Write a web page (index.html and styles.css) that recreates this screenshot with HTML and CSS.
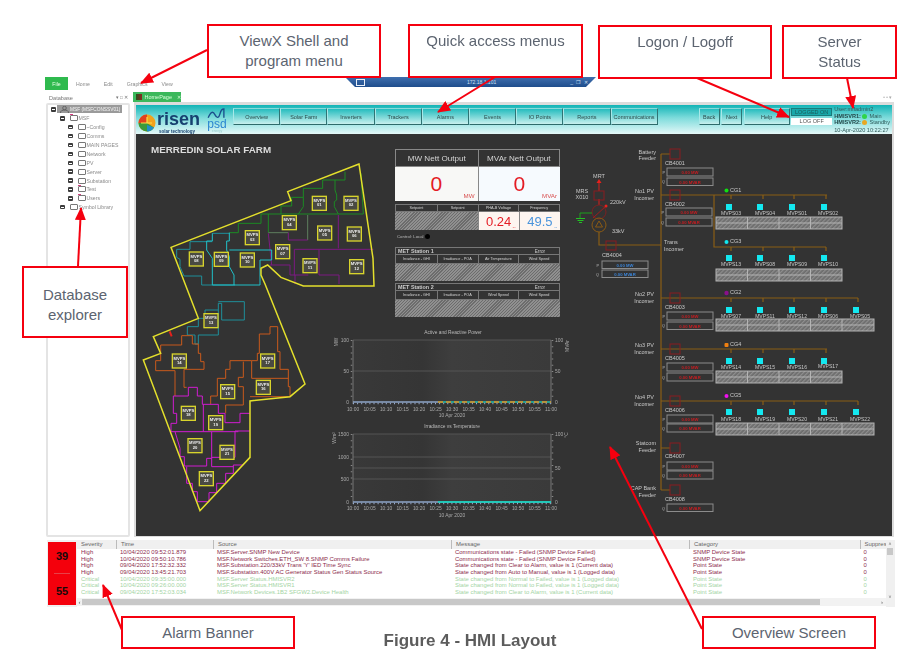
FILE: index.html
```html
<!DOCTYPE html>
<html lang="en">
<head>
<meta charset="utf-8">
<title>Figure 4 - HMI Layout</title>
<link rel="stylesheet" href="styles.css">
</head>
<body>
<div class="page">
  <div class="ribbon">
    <span class="file">File</span>
    <nav class="ribbon-menu"><span>Home</span><span>Edit</span><span>Graphics</span><span>View</span></nav>
  </div>
  <div class="titlebar">
    <span class="tb-icon"></span><span class="tb-host">172.18.1.101</span><span class="tb-ctl">_ &#10064; &#10005;</span>
  </div>

  <div class="workspace">
    <aside class="db">
      <div class="db-title"><span>Database</span><span class="db-ctl">&#9662; &#9633; &#10005;</span></div>
      <div class="tree">
        <div class="node n0"><i class="exp"></i><span class="root"><svg class="user" viewBox="0 0 9 7" width="9" height="7"><circle cx="4.5" cy="2" r="1.800" fill="none" stroke="#555" stroke-width=".8"/><path d="M.5 7c0-2.500 2-3 4-3s4 .5 4 3" fill="none" stroke="#555" stroke-width=".8"/></svg>MSF (MSFCONSSV01)</span></div>
        <div class="node n1"><i class="exp"></i><i class="folder flag"></i>MSF</div>
        <div class="node n2"><i class="exp"></i><i class="folder"></i>~Config</div>
        <div class="node n2"><i class="exp"></i><i class="folder"></i>Comms</div>
        <div class="node n2"><i class="exp"></i><i class="folder"></i>MAIN PAGES</div>
        <div class="node n2"><i class="exp"></i><i class="folder"></i>Network</div>
        <div class="node n2"><i class="exp"></i><i class="folder"></i>PV</div>
        <div class="node n2"><i class="exp"></i><i class="folder"></i>Server</div>
        <div class="node n2"><i class="exp"></i><i class="folder"></i>Substation</div>
        <div class="node n2"><i class="exp"></i><i class="folder flag"></i>Test</div>
        <div class="node n2"><i class="exp"></i><i class="folder flag"></i>Users</div>
        <div class="node n1"><i class="exp"></i><i class="folder"></i>Symbol Library</div>
      </div>
    </aside>

    <main class="main">
      <div class="tabs">
        <div class="tab"><i class="tab-icon"></i>HomePage<span class="tab-x">&#10005;</span></div>
        <div class="tab-dots">&#8226; &#8226; &#9662;</div>
      </div>
      <div class="frame">
        <header class="hmi-head">
          <div class="logo">
            <svg class="sun" viewBox="0 0 18 18" width="18" height="18">
              <circle cx="9" cy="9" r="8.5" fill="#f2a21c"/>
              <path d="M.5 9a8.5 8.5 0 0 1 8.5-8.5V9z" fill="#e2401f"/>
              <path d="M.5 9a8.5 8.5 0 0 0 8.5 8.5 8.5 8.5 0 0 0 7-4L9 9z" fill="#3c9a3a"/>
              <path d="M9 17.5a8.5 8.5 0 0 0 7-4L9 11z" fill="#1f8fc8"/>
              <path d="M3 9h11M9 3v6" stroke="#f7e04a" stroke-width="1.2"/>
            </svg>
            <div class="risen"><span class="risen-name">risen</span><span class="risen-sub">solar technology</span></div>
            <div class="psd">
              <svg viewBox="0 0 20 11" width="20" height="11"><path d="M1 10c3-7 5-7 7-3s4 3 5-1 2-5 4-5v9" fill="none" stroke="#1c4f8c" stroke-width="1.4"/></svg>
              <span class="psd-name">psd</span><span class="psd-sub">energy</span>
            </div>
          </div>
          <nav class="menu">
            <a>Overview</a><a>Solar Farm</a><a>Inverters</a><a>Trackers</a><a>Alarms</a><a>Events</a><a>IO Points</a><a>Reports</a><a>Communications</a>
          </nav>
          <nav class="menu menu-b"><a class="back">Back</a><a class="next">Next</a><a class="help">Help</a></nav>
          <div class="logon"><span class="on">LOGGED ON</span><span class="off">LOG OFF</span></div>
          <div class="status">
            <div>User:mlfadmin2</div>
            <div><b>HMISVR1:</b><i class="led main-led"></i> Main</div>
            <div><b>HMISVR2:</b><i class="led stby-led"></i> Standby</div>
            <div class="stamp">10-Apr-2020 10:22:27</div>
          </div>
        </header>

        <section class="board">
          <svg class="map" viewBox="0 0 777 1206" width="259" height="402" aria-label="Site map">
            <text class="map-title" x="45" y="58">MERREDIN SOLAR FARM</text>
            <g transform="translate(-3 18)" fill="none" stroke-width="3">
              <g stroke="#1c8a24">
                <path d="M630 95V120H563V145H505V172H470V198H438V222H378V250H310V278H283M600 120V150L605 165V180L598 185V200L610 222M505 172V200L490 222M400 222V278M438 222H610M610 222H685L678 100"/>
              </g>
              <path stroke="#5d7d5d" d="M518 225V300M400 278H460"/>
              <g stroke="#7c1a82">
                <path d="M610 225V325M460 278V300H518M478 328H715M478 328V405H520M552 328V405H612V432M405 375H465V405H480V432M400 280L410 375"/>
              </g>
              <g stroke="#1f8f9a">
                <path d="M165 305V328H125V352L135 358V380L147 408H200V435H300M165 305H232M232 280H283M250 485H328V540H260V490H250V510H210V535H190V560H157V585H180V612H190V585H250V510"/>
              </g>
              <g stroke="#20c0c8">
                <path d="M232 280V303H215V330L232 355V435H375V360H410V330H283M283 278V303H275V330L283 350V380L297 405V435"/>
              </g>
              <g stroke="#c8591c">
                <path d="M405 560H428V635H435V688H460V740H465V770H345M405 560V582H373V640H367V662H350V715H460M77 640V615H140V587H172V612H190V640H197V665H207V688H147V742H155M77 640V662H62V692H120V768M350 662H285V688H272V715H247V768H227V793M325 665V712H310V740H325V795H272V820"/>
              </g>
              <g stroke="#d01cd0">
                <path d="M115 768H160V742H187V768H202V793H250V820H270V848H315V820H345M115 768V820H125V850H108V875H310M205 793V875M230 875V980H295M230 952H300V873H345M120 875L135 925V950H148V978H215V955H230M155 980V1030H172V1055H187V1085H222V1058H245V1030H272V1000H295V975H325"/>
              </g>
              <path stroke="#e4e02c" stroke-width="4.5" d="M672 72L458 155L468 182L108 322L190 535L55 590L77 640L25 660L195 1112L345 952V783L465 770L510 732L390 432L378 405V385L398 375L438 412L505 438H717L714 355Z"/>
              <path stroke="#e8201c" stroke-width="6" d="M104 574L110 589"/>
              <g class="unit">
                <rect x="532" y="169" width="42" height="42"/><text x="553" y="186">MVPS<tspan x="553" dy="13">01</tspan></text>
                <rect x="627" y="169" width="42" height="42"/><text x="648" y="186">MVPS<tspan x="648" dy="13">02</tspan></text>
                <rect x="331" y="272" width="42" height="42"/><text x="352" y="289">MVPS<tspan x="352" dy="13">03</tspan></text>
                <rect x="442" y="227" width="42" height="42"/><text x="463" y="244">MVPS<tspan x="463" dy="13">04</tspan></text>
                <rect x="548" y="258" width="42" height="42"/><text x="569" y="275">MVPS<tspan x="569" dy="13">05</tspan></text>
                <rect x="637" y="261" width="42" height="42"/><text x="658" y="278">MVPS<tspan x="658" dy="13">06</tspan></text>
                <rect x="422" y="314" width="42" height="42"/><text x="443" y="331">MVPS<tspan x="443" dy="13">07</tspan></text>
                <rect x="163" y="336" width="42" height="42"/><text x="184" y="353">MVPS<tspan x="184" dy="13">08</tspan></text>
                <rect x="238" y="337" width="42" height="42"/><text x="259" y="354">MVPS<tspan x="259" dy="13">09</tspan></text>
                <rect x="316" y="339" width="42" height="42"/><text x="337" y="356">MVPS<tspan x="337" dy="13">10</tspan></text>
                <rect x="504" y="356" width="42" height="42"/><text x="525" y="373">MVPS<tspan x="525" dy="13">11</tspan></text>
                <rect x="644" y="359" width="42" height="42"/><text x="665" y="376">MVPS<tspan x="665" dy="13">12</tspan></text>
                <rect x="207" y="521" width="42" height="42"/><text x="228" y="538">MVPS<tspan x="228" dy="13">13</tspan></text>
                <rect x="112" y="642" width="42" height="42"/><text x="133" y="659">MVPS<tspan x="133" dy="13">14</tspan></text>
                <rect x="257" y="734" width="42" height="42"/><text x="278" y="751">MVPS<tspan x="278" dy="13">15</tspan></text>
                <rect x="364" y="721" width="42" height="42"/><text x="385" y="738">MVPS<tspan x="385" dy="13">16</tspan></text>
                <rect x="377" y="642" width="42" height="42"/><text x="398" y="659">MVPS<tspan x="398" dy="13">17</tspan></text>
                <rect x="139" y="799" width="42" height="42"/><text x="160" y="816">MVPS<tspan x="160" dy="13">18</tspan></text>
                <rect x="221" y="827" width="42" height="42"/><text x="242" y="844">MVPS<tspan x="242" dy="13">19</tspan></text>
                <rect x="159" y="896" width="42" height="42"/><text x="180" y="913">MVPS<tspan x="180" dy="13">20</tspan></text>
                <rect x="255" y="916" width="42" height="42"/><text x="276" y="933">MVPS<tspan x="276" dy="13">21</tspan></text>
                <rect x="193" y="995" width="42" height="42"/><text x="214" y="1012">MVPS<tspan x="214" dy="13">22</tspan></text>
              </g>
            </g>
          </svg>

          <div class="gauges">
            <div class="g-head"><div>MW Nett Output</div><div>MVAr Nett Output</div></div>
            <div class="g-vals">
              <div class="g-big tint-a">0<span>MW</span></div>
              <div class="g-big tint-b">0<span>MVAr</span></div>
            </div>
            <div class="g-labels"><div>Setpoint</div><div>Setpoint</div><div>PHA-B Voltage</div><div>Frequency</div></div>
            <div class="g-row">
              <div class="hatch span2"></div>
              <div class="g-mid red">0.24<span>kV</span></div>
              <div class="g-mid blue">49.5<span>Hz</span></div>
            </div>
            <div class="control">Control: Local<i></i></div>
            <div class="met first">
              <div class="met-head"><b>MET Station 1</b><span>Error</span></div>
              <div class="g-labels dark"><div>Irradiance - GHI</div><div>Irradiance - POA</div><div>Air Temperature</div><div>Wind Speed</div></div>
              <div class="hatch met-h"></div>
            </div>
            <div class="met">
              <div class="met-head"><b>MET Station 2</b><span>Error</span></div>
              <div class="g-labels dark"><div>Irradiance - GHI</div><div>Irradiance - POA</div><div>Wind Speed</div><div>Wind Speed</div></div>
              <div class="hatch met-h"></div>
            </div>
          </div>

          <svg class="charts" viewBox="325 320 247 216" width="247" height="216" aria-label="Trend charts">
            <defs>
              <linearGradient id="band" x1="0" x2="1" y1="0" y2="0">
                <stop offset="0" stop-color="#393939"/><stop offset=".35" stop-color="#353535"/><stop offset=".5" stop-color="#3e3e3e"/><stop offset="1" stop-color="#3a3a3a"/>
              </linearGradient>
            </defs>
            <text class="c-title" x="453" y="334">Active and Reactive Power</text>
            <rect x="353" y="340" width="198" height="62" fill="url(#band)"/>
            <path class="grid" d="M353 340H551M353 371H551"/>
            <path class="axis" d="M353 340V404M551 340V404"/>
            <path class="tick" d="M351.5 340V402M552.5 340V402"/>
            <path d="M353 402H438" stroke="#8ea6c8" stroke-width="1.5"/>
            <path d="M438 402H551" stroke="#20c0b0" stroke-width="1.5"/>
            <path d="M438 402H551" stroke="#e8901c" stroke-width="1.5" stroke-dasharray="5 3"/>
            <path class="xtick" d="M353 403.5H551"/>
            <g class="c-lab">
              <text class="end" x="349" y="342">100</text><text class="end" x="349" y="373">50</text><text class="end" x="349" y="404">0</text>
              <text x="555" y="342">100</text><text x="555" y="373">50</text><text x="555" y="404">0</text>
              <text class="mid rot" transform="rotate(-90 338 342)" x="338" y="342">MW</text>
              <text class="mid rot" transform="rotate(-90 569 346)" x="569" y="346">MVAr</text>
            </g>
            <g class="c-lab mid">
              <text x="353" y="411">10:00</text><text x="369.5" y="411">10:05</text><text x="386" y="411">10:10</text><text x="402.500" y="411">10:15</text><text x="419" y="411">10:20</text><text x="435.5" y="411">10:25</text><text x="452" y="411">10:30</text><text x="468.5" y="411">10:35</text><text x="485" y="411">10:40</text><text x="501.5" y="411">10:45</text><text x="518" y="411">10:50</text><text x="534.5" y="411">10:55</text><text x="551" y="411">11:00</text>
              <text x="452" y="417">10 Apr 2020</text>
            </g>

            <text class="c-title" x="452" y="428">Irradiance vs Temperature</text>
            <rect x="353" y="434" width="198" height="68" fill="url(#band)"/>
            <path class="grid" d="M353 434H551M353 457H551M353 468H551M353 479H551"/>
            <path class="axis" d="M353 434V504M551 434V504"/>
            <path class="tick" d="M351.5 434V502M552.5 434V502"/>
            <path d="M353 502H438" stroke="#8ea6c8" stroke-width="1.5"/>
            <path d="M438 502H551" stroke="#20c8b8" stroke-width="2"/>
            <path class="xtick" d="M353 503.500H551"/>
            <g class="c-lab">
              <text class="end" x="349" y="436">1500</text><text class="end" x="349" y="459">1000</text><text class="end" x="349" y="481">500</text><text class="end" x="349" y="504">0</text>
              <text x="555" y="436">100</text><text x="555" y="470">50</text><text x="555" y="504">0</text>
              <text class="mid rot" transform="rotate(-90 336 438)" x="336" y="438">W/m&#178;</text>
              <text class="mid rot" transform="rotate(-90 568 435)" x="568" y="435">&#176;C</text>
            </g>
            <g class="c-lab mid">
              <text x="353" y="510">10:00</text><text x="369.5" y="510">10:05</text><text x="386" y="510">10:10</text><text x="402.500" y="510">10:15</text><text x="419" y="510">10:20</text><text x="435.5" y="510">10:25</text><text x="452" y="510">10:30</text><text x="468.5" y="510">10:35</text><text x="485" y="510">10:40</text><text x="501.5" y="510">10:45</text><text x="518" y="510">10:50</text><text x="534.5" y="510">10:55</text><text x="551" y="510">11:00</text>
              <text x="452" y="517">10 Apr 2020</text>
            </g>
          </svg>

          <svg class="sld" viewBox="572 134 320 402" width="320" height="402" aria-label="Single line diagram">
            <defs>
              <pattern id="h" width="3" height="3" patternUnits="userSpaceOnUse" patternTransform="rotate(45)">
                <rect width="3" height="3" fill="#6c6c6c"/><rect width="1.3" height="3" fill="#8e8e8e"/>
              </pattern>
            </defs>

            <!-- transformer -->
            <text class="t m" x="599" y="178">MRT</text>
            <text class="t m" x="582" y="193">MRS</text><text class="t m" x="582" y="199">X010</text>
            <text class="t" x="610" y="204">220kV</text>
            <text class="t" x="612" y="233">33kV</text>
            <path d="M599 199V205M599 191V182" stroke="#d8201c" fill="none"/>
            <path d="M599 179l-2.500 4h5z" fill="#e8201c"/>
            <rect x="594" y="191" width="10" height="9" class="cb"/>
            <circle cx="599" cy="212" r="7" fill="none" stroke="#7c2020"/>
            <path d="M593 218L606 206" stroke="#a01c1c"/><circle cx="606" cy="206" r="1.500" fill="#e8201c"/>
            <path d="M592 213H580V218" fill="none" stroke="#1ca01c"/>
            <path d="M576 218.500H585M577.500 220.500H583.500M579 222.500H582" stroke="#24c024"/>
            <circle cx="599" cy="225" r="7" fill="none" stroke="#8a5a14"/>
            <path d="M599 221l-3.500 6h7z" fill="none" stroke="#8a5a14"/>

            <g class="bus">
              <path d="M599 232V245H661M661 154V490"/>
              <path d="M661 154H670M661 195H827M714 195V247H826M731 195V199M763 195V199M794 195V199M826 195V199M731 247V251M763 247V251M794 247V251M826 247V251"/>
              <path d="M661 298H858M731 298V302M763 298V302M794 298V302M826 298V302M858 298V302"/>
              <path d="M661 349H827M731 349V353M763 349V353M794 349V353M826 349V353"/>
              <path d="M661 401H858M731 401V405M763 401V405M794 401V405M826 401V405M858 401V405"/>
              <path d="M661 448H670M661 490H670"/>
            </g>

            <g class="cbs">
              <rect x="606" y="241" width="10" height="9"/><rect x="670" y="149" width="10" height="10"/><rect x="670" y="190" width="10" height="10"/><rect x="670" y="293" width="10" height="10"/><rect x="670" y="344" width="10" height="10"/><rect x="670" y="396" width="10" height="10"/><rect x="670" y="443" width="10" height="10"/><rect x="670" y="485" width="10" height="10"/>
            </g>

            <!-- feeder labels -->
            <g class="t e">
              <text x="656" y="153.500">Battery</text><text x="656" y="160">Feeder</text>
              <text x="654" y="193">No1 PV</text><text x="654" y="199.500">Incomer</text>
              <text x="654" y="296">No2 PV</text><text x="654" y="302.500">Incomer</text>
              <text x="654" y="347">No3 PV</text><text x="654" y="353.500">Incomer</text>
              <text x="654" y="399">No4 PV</text><text x="654" y="405.500">Incomer</text>
              <text x="656" y="445">Statcom</text><text x="656" y="451.500">Feeder</text>
              <text x="656" y="490">CAP Bank</text><text x="656" y="496.500">Feeder</text>
            </g>
            <text class="t" x="664" y="244">Trans</text><text class="t" x="664" y="250.500">Incomer</text>

            <g class="t">
              <text x="602" y="257">CB4004</text><text x="665" y="165">CB4001</text><text x="665" y="206">CB4002</text><text x="665" y="309">CB4003</text><text x="665" y="360">CB4005</text><text x="665" y="411.500">CB4006</text><text x="665" y="458">CB4007</text><text x="665" y="501">CB4008</text>
              <text x="730" y="192">CG1</text><text x="730" y="243">CG3</text><text x="730" y="294">CG2</text><text x="730" y="346">CG4</text><text x="730" y="397">CG5</text>
            </g>
            <circle cx="726.500" cy="190.500" r="2" fill="#10e010"/><circle cx="726.500" cy="242" r="2" fill="#10e8f0"/><circle cx="726.500" cy="293" r="2.200" fill="#8a108a"/><rect x="724.500" y="343" width="4" height="4" rx="1" fill="#f08010"/><circle cx="726.500" cy="396" r="2" fill="#f010f0"/>

            <!-- P / Q readouts -->
            <g class="pq">
              <rect x="602" y="261" width="46" height="7.500"/><rect x="602" y="270" width="46" height="7.500"/>
              <rect x="667" y="168" width="46" height="8"/><rect x="667" y="178" width="46" height="7.500"/>
              <rect x="666" y="208" width="46" height="8"/><rect x="666" y="218" width="46" height="8"/>
              <rect x="667" y="312" width="46" height="8"/><rect x="667" y="322" width="46" height="7.500"/>
              <rect x="667" y="363" width="46" height="8"/><rect x="667" y="373" width="46" height="8"/>
              <rect x="667" y="415" width="46" height="8"/><rect x="667" y="424" width="46" height="8"/>
              <rect x="667" y="462" width="46" height="8"/><rect x="667" y="471" width="46" height="8"/>
              <rect x="667" y="504" width="46" height="7.500"/>
            </g>
            <g class="pql">
              <text x="599" y="266.500">P</text><text x="599" y="275.500">Q</text>
              <text x="665" y="173.500">P</text><text x="665" y="183">Q</text>
              <text x="664" y="213.500">P</text><text x="664" y="223.500">Q</text>
              <text x="665" y="317.500">P</text><text x="665" y="327">Q</text>
              <text x="665" y="368.500">P</text><text x="665" y="378.500">Q</text>
              <text x="665" y="420.500">P</text><text x="665" y="429.500">Q</text>
              <text x="665" y="467.500">P</text><text x="665" y="476.500">Q</text>
              <text x="665" y="509.500">Q</text>
            </g>
            <g class="val blue-t"><text x="625" y="266.500">0.00 MW</text><text x="625" y="275.500">0.00 MVAR</text></g>
            <g class="val red-t">
              <text x="690" y="173.500">0.00 MW</text><text x="690" y="183.500">0.00 MVAR</text>
              <text x="689" y="213.500">0.00 MW</text><text x="689" y="223.500">0.00 MVAR</text>
              <text x="690" y="317.500">0.00 MW</text><text x="690" y="327.500">0.00 MVAR</text>
              <text x="690" y="368.500">0.00 MW</text><text x="690" y="378.500">0.00 MVAR</text>
              <text x="690" y="420.500">0.00 MW</text><text x="690" y="429.500">0.00 MVAR</text>
              <text x="690" y="467.500">0.00 MW</text><text x="690" y="476.500">0.00 MVAR</text>
              <text x="690" y="509.500">0.00 MVAR</text>
            </g>

            <!-- inverter squares -->
            <g fill="#14e8f0">
              <rect x="726" y="204" width="6" height="6"/><rect x="757" y="204" width="6" height="6"/><rect x="789" y="204" width="6" height="6"/><rect x="821" y="204" width="6" height="6"/>
              <rect x="726" y="255" width="6" height="6"/><rect x="757" y="255" width="6" height="6"/><rect x="789" y="255" width="6" height="6"/><rect x="821" y="255" width="6" height="6"/>
              <rect x="726" y="307" width="6" height="6"/><rect x="757" y="307" width="6" height="6"/><rect x="789" y="307" width="6" height="6"/><rect x="821" y="307" width="6" height="6"/><rect x="853" y="307" width="6" height="6"/>
              <rect x="726" y="358" width="6" height="6"/><rect x="757" y="358" width="6" height="6"/><rect x="789" y="358" width="6" height="6"/><rect x="821" y="358" width="6" height="6"/>
              <rect x="726" y="409" width="6" height="6"/><rect x="757" y="409" width="6" height="6"/><rect x="789" y="409" width="6" height="6"/><rect x="821" y="409" width="6" height="6"/><rect x="853" y="409" width="6" height="6"/>
            </g>

            <g class="t m">
              <text x="731" y="215">MVPS03</text><text x="765" y="215">MVPS04</text><text x="797" y="215">MVPS01</text><text x="828" y="215">MVPS02</text>
              <text x="731" y="266">MVPS13</text><text x="765" y="266">MVPS08</text><text x="797" y="266">MVPS09</text><text x="828" y="266">MVPS10</text>
              <text x="731" y="318">MVPS07</text><text x="765" y="318">MVPS11</text><text x="797" y="318">MVPS12</text><text x="828" y="318">MVPS06</text><text x="860" y="318">MVPS05</text>
              <text x="731" y="369">MVPS14</text><text x="765" y="369">MVPS15</text><text x="797" y="369">MVPS16</text><text x="828" y="367.500">MVPS17</text>
              <text x="731" y="421">MVPS18</text><text x="765" y="421">MVPS19</text><text x="797" y="421">MVPS20</text><text x="828" y="421">MVPS21</text><text x="860" y="421">MVPS22</text>
            </g>

            <g class="cells">
              <rect x="716" y="217" width="126" height="12"/><path d="M716 223H842M747.500 217V229M779 217V229M810.500 217V229"/>
              <rect x="716" y="269" width="126" height="12"/><path d="M716 275H842M747.500 269V281M779 269V281M810.500 269V281"/>
              <rect x="716" y="319" width="158" height="12"/><path d="M716 325H874M747.500 319V331M779 319V331M810.500 319V331M842 319V331"/>
              <rect x="716" y="371" width="126" height="12"/><path d="M716 377H842M747.500 371V383M779 371V383M810.500 371V383"/>
              <rect x="716" y="423" width="158" height="12"/><path d="M716 429H874M747.500 423V435M779 423V435M810.500 423V435M842 423V435"/>
            </g>
          </svg>
        </section>
      </div>
    </main>
  </div>

  <section class="banner">
    <div class="counts"><b>39</b><hr><b>55</b></div>
    <div class="alarms">
      <div class="a-row a-head"><span>Severity</span><span>Time</span><span>Source</span><span>Message</span><span>Category</span><span>Suppres</span></div>
      <div class="a-body">
        <div class="a-row high"><span>High</span><span>10/04/2020 09:52:01.879</span><span>MSF.Server.SNMP New Device</span><span>Communications state - Failed (SNMP Device Failed)</span><span>SNMP Device State</span><span>0</span></div>
        <div class="a-row high"><span>High</span><span>10/04/2020 09:50:10.786</span><span>MSF.Network Switches.ETH_SW 8.SNMP Comms Failure</span><span>Communications state - Failed (SNMP Device Failed)</span><span>SNMP Device State</span><span>0</span></div>
        <div class="a-row high"><span>High</span><span>09/04/2020 17:52:32.332</span><span>MSF.Substation.220/33kV Trans 'Y' IED Time Sync</span><span>State changed from Clear to Alarm, value is 1 (Current data)</span><span>Point State</span><span>0</span></div>
        <div class="a-row high"><span>High</span><span>09/04/2020 13:45:21.703</span><span>MSF.Substation.400V AC Generator Status Gen Status Source</span><span>State changed from Auto to Manual, value is 1 (Logged data)</span><span>Point State</span><span>0</span></div>
        <div class="a-row crit"><span>Critical</span><span>10/04/2020 09:35:00.000</span><span>MSF.Server Status.HMISVR2</span><span>State changed from Normal to Failed, value is 1 (Logged data)</span><span>Point State</span><span>0</span></div>
        <div class="a-row crit"><span>Critical</span><span>10/04/2020 09:26:00.000</span><span>MSF.Server Status.HMISVR1</span><span>State changed from Normal to Failed, value is 1 (Logged data)</span><span>Point State</span><span>0</span></div>
        <div class="a-row crit"><span>Critical</span><span>09/04/2020 17:52:03.034</span><span>MSF.Network Devices.1B2 SFGW2.Device Health</span><span>State changed from Clear to Alarm, value is 1 (Current data)</span><span>Point State</span><span>0</span></div>
      </div>
      <div class="hscroll"><span class="sl">&#8249;</span><span class="thumb"></span><span class="sr">&#8250;</span></div>
    </div>
    <div class="vscroll"><span>&#708;</span><i></i><span class="dn">&#709;</span></div>
  </section>

  <p class="caption">Figure 4 - HMI Layout</p>

  <div class="callout c-shell">ViewX Shell and<br>program menu</div>
  <div class="callout c-quick">Quick access menus</div>
  <div class="callout c-logon">Logon / Logoff</div>
  <div class="callout c-server">Server<br>Status</div>
  <div class="callout c-db">Database<br>explorer</div>
  <div class="callout c-alarm">Alarm Banner</div>
  <div class="callout c-over">Overview Screen</div>

  <svg class="arrows" viewBox="0 0 916 669" width="916" height="669" aria-hidden="true">
    <defs>
      <marker id="ah" markerWidth="13" markerHeight="11" refX="12" refY="5.5" orient="auto" markerUnits="userSpaceOnUse">
        <path d="M0 0L13 5.500L0 11z" fill="#f5000f"/>
      </marker>
    </defs>
    <g stroke="#f5000f" stroke-width="2" marker-end="url(#ah)">
      <line x1="207" y1="50" x2="141" y2="83"/>
      <line x1="495" y1="77" x2="438" y2="112"/>
      <line x1="697" y1="78" x2="789" y2="117"/>
      <line x1="847" y1="78" x2="853" y2="108"/>
      <line x1="78" y1="266" x2="81" y2="208"/>
      <line x1="122" y1="630" x2="103" y2="585"/>
      <line x1="702" y1="629" x2="610" y2="447"/>
    </g>
  </svg>
</div>
</body>
</html>
```

FILE: styles.css
```css
* { box-sizing: border-box; }
html, body { margin: 0; background: #fff; }
body { font-family: "Liberation Sans", Arial, sans-serif; color: #444; }
.page { position: relative; width: 916px; height: 669px; padding-top: 77px; overflow: hidden; filter: blur(.35px); }

/* ribbon */
.ribbon { display: flex; height: 13px; margin-left: 45px; font-size: 5.2px; }
.file { width: 23px; background: #2fba4e; color: #e8ffe8; display: flex; align-items: center; justify-content: center; }
.ribbon-menu { display: flex; gap: 14px; padding-left: 8px; align-items: center; color: #8a8a8a; }
.titlebar { position: absolute; left: 345px; top: 77px; width: 251px; height: 10px; background: linear-gradient(#3f6fae, #1f4d8c); clip-path: polygon(0 0, 100% 0, 96% 100%, 4% 100%); color: #cfe0f4; font-size: 5px; display: flex; align-items: center; }
.tb-icon { width: 9px; height: 7px; margin-left: 11px; border: 1px solid #e8eef8; }
.tb-host { margin-left: 102px; }
.tb-ctl { margin-left: 74px; letter-spacing: 1px; }

/* workspace */
.workspace { display: flex; margin: 2px 0 0 46px; height: 445px; }
.db { width: 84px; margin-right: 3px; display: flex; flex-direction: column; }
.db-title { height: 11px; display: flex; justify-content: space-between; align-items: center; padding: 0 2px 0 3px; font-size: 5.6px; color: #777; }
.db-ctl { font-size: 4.5px; }
.tree { flex: 1; border: 2px solid #e4e4e4; border-radius: 2px; background: #fff; font-size: 5.2px; color: #8a8a8a; }
.node { height: 8.9px; display: flex; align-items: center; white-space: nowrap; }
.n0 { padding-left: 3px; }
.n1 { padding-left: 12px; }
.n2 { padding-left: 20px; }
.exp { width: 4.5px; height: 4.5px; background: #3c3c3c; border-radius: 1px; margin-right: 5px; flex: none; position: relative; }
.exp::after { content: ""; position: absolute; left: 1px; top: 2px; width: 2.5px; height: .6px; background: #fff; }
.n0 .exp { margin-right: 1.5px; }
.root { display: flex; align-items: center; width: 65px; background: #9a9a9a; color: #f4f4f4; padding: 0 0 0 3px; font-size: 4.8px; height: 8px; }
.user { margin-right: 1px; flex: none; }
.folder { width: 8px; height: 6px; border: .8px solid #777; border-radius: 1px; margin-right: 1px; flex: none; position: relative; }
.flag::before { content: ""; position: absolute; left: -1px; top: -2.5px; width: 3px; height: 1.5px; background: #d83a80; }

/* main */
.main { width: 763px; }
.tabs { height: 10px; display: flex; justify-content: space-between; }
.tab { width: 48px; background: #3cb85c; color: #dcffdc; font-size: 5.5px; display: flex; align-items: center; padding-left: 3px; }
.tab-icon { width: 7px; height: 6px; margin-right: 2px; background: linear-gradient(90deg, #2a5020, #8a2a20); }
.tab-x { margin-left: 5px; font-size: 4.5px; }
.tab-dots { font-size: 4.5px; color: #aaa; padding: 3px 4px 0 0; }
.frame { width: 760px; margin-left: 1px; padding: 3px 2px 1px; background: #dcdcdc; }

/* hmi header */
.hmi-head { height: 29px; display: flex; align-items: flex-start; padding-top: 3px; background: linear-gradient(#12b4b6, #7fdcdc 45%, #e4f8f8); }
.logo { width: 97px; height: 26px; display: flex; padding: 3px 0 0 2px; flex: none; }
.sun { margin-top: 3px; flex: none; }
.risen { width: 46px; margin-left: 1px; display: flex; flex-direction: column; color: #17406f; }
.risen-name { font-size: 18px; line-height: 16px; font-weight: 700; }
.risen-sub { font-size: 4.5px; line-height: 5px; padding: 2px 0 0 2px; font-weight: 700; box-sizing: content-box; }
.psd { margin-left: 2px; width: 24px; margin-top: -3px; display: flex; flex-direction: column; align-items: center; }
.psd-name { font-size: 12px; line-height: 10px; color: #2c86d0; }
.psd-sub { font-size: 3.4px; line-height: 3.6px; margin-top: 1.6px; color: #9cc; }
.menu { display: flex; height: 17px; flex: none; }
.menu a { width: 47.2px; display: flex; align-items: center; justify-content: center; font-size: 5.5px; color: #2c4a4a; background: linear-gradient(#25bcbe, #c8f0ee); border-top: 1px solid #8adada; border-right: 1px solid #2f7474; border-bottom: 1px solid #2f6a6a; border-left: 1px solid #a8e8e8; white-space: nowrap; }
.menu-b { margin-left: 41px; gap: 1.5px; }
.menu .back, .menu .next { width: 21px; }
.menu .help { width: 46px; }
.logon { width: 41px; margin-left: 1.5px; display: flex; flex-direction: column; gap: 2px; font-size: 5.5px; text-align: center; flex: none; }
.on { height: 8px; line-height: 7px; background: #17a8aa; color: #1c5a5a; border: 1px solid #1a7a7a; }
.off { height: 7px; line-height: 7px; background: #fff; color: #555; }
.status { margin: -2px 0 0 2px; width: 56px; font-size: 5.6px; line-height: 6.7px; color: #2f5a5a; white-space: nowrap; }
.status b { color: #24484a; }
.led { display: inline-block; width: 5px; height: 5px; border-radius: 50%; margin: 0 1px 0 1px; vertical-align: -1px; }
.main-led { background: #2fd44a; }
.stby-led { background: #e8a824; }
.stamp { text-align: right; padding: 1px 2px 0 0; }

/* board: map, gauges, charts and one-line diagram share a grid */
.board { height: 402px; background: #333; display: grid; grid-template-columns: 189px 70px 177px 320px; grid-template-rows: 186px 216px; color: #ddd; overflow: hidden; }
.map { grid-column: 1 / 3; grid-row: 1 / 3; }
.map-title { font-size: 29.5px; font-weight: 700; fill: #ddd; }
.unit rect { fill: #4a4a42; stroke: #d8d42c; stroke-width: 4; }
.unit text { fill: #eee; stroke: none; font-size: 12.5px; font-weight: 700; text-anchor: middle; }
.gauges { grid-column: 3; grid-row: 1; width: 165px; padding-top: 15px; }
.g-head, .g-vals { display: grid; grid-template-columns: 1fr 1fr; }
.g-head { height: 18px; border: 1px solid #888; font-size: 8.1px; color: #d4d4d4; }
.g-head div { display: flex; align-items: center; justify-content: center; }
.g-head div + div { border-left: 1px solid #888; }
.g-vals { height: 34px; }
.g-big { position: relative; display: flex; justify-content: center; align-items: center; font-size: 21px; color: #e41c24; }
.g-big span { position: absolute; right: 3px; bottom: 2px; font-size: 6.2px; color: #d85050; }
.tint-a { background: #f8f8f6; }
.tint-b { background: #f6fafe; border-left: 1px solid #888; }
.g-labels { display: grid; grid-template-columns: repeat(4, 1fr); height: 8px; margin-top: 3px; border: 1px solid #777; font-size: 3.8px; color: #d4d4d4; }
.g-labels div { display: flex; align-items: center; justify-content: center; white-space: nowrap; }
.g-labels div + div { border-left: 1px solid #777; }
.g-labels.dark { margin-top: 0; height: 9px; border-top: 0; }
.g-row { display: grid; grid-template-columns: repeat(4, 1fr); height: 18px; }
.span2 { grid-column: span 2; }
.hatch { background: repeating-linear-gradient(135deg, #6c6c6c 0 1px, #909090 1px 2.2px); }
.g-mid { position: relative; background: #fdf5f0; display: flex; justify-content: center; align-items: center; font-size: 13px; border-left: 1px solid #888; }
.g-mid span { position: absolute; right: 3px; bottom: 1px; font-size: 2.5px; }
.red { color: #e41c24; }
.blue { color: #4a94dc; }
.control { height: 8px; margin-top: 2px; display: flex; align-items: center; font-size: 4.3px; color: #bbb; padding-left: 2px; }
.control i { width: 5px; height: 5px; margin-left: 1px; border-radius: 50%; background: #000; }
.met { margin-top: 2px; }
.met.first { margin-top: 7px; }
.met-head { height: 8px; display: flex; justify-content: space-between; align-items: center; padding: 0 14px 0 2px; border: 1px solid #777; font-size: 4.6px; color: #ccc; }
.met-head b { font-size: 5.4px; }
.met-h { height: 17px; }
.charts { grid-column: 2 / 4; grid-row: 2; }
.c-title { font-size: 4.8px; fill: #bbb; text-anchor: middle; }
.grid { stroke: #555; stroke-width: 1; fill: none; }
.axis { stroke: #777; stroke-width: 1; fill: none; }
.tick { stroke: #888; stroke-width: 1.5; stroke-dasharray: 1 5.2; fill: none; }
.xtick { stroke: #9ac; stroke-width: 1.5; stroke-dasharray: 1 3.1; fill: none; }
.c-lab text { font-size: 4.9px; fill: #aaa; }
.c-lab .end { text-anchor: end; }
.c-lab.mid text, .c-lab .mid { text-anchor: middle; }
.sld { grid-column: 4; grid-row: 1 / 3; }
.t text, text.t { font-size: 5.5px; fill: #c8c8c8; }
.t.m text, text.t.m { text-anchor: middle; }
.t.m text { font-size: 5.1px; }
.t.e text { text-anchor: end; }
.cb, .cbs rect { fill: none; stroke: #8a1c20; stroke-width: 1; }
.bus { fill: none; stroke: #8a5e14; stroke-width: 1.2; }
.pq rect { fill: #333; stroke: #8c8c8c; stroke-width: 1; }
.pql text { font-size: 3.8px; fill: #bbb; text-anchor: end; }
.val text { font-size: 4.2px; font-weight: 700; text-anchor: middle; }
.red-t text { fill: #c81c20; }
.blue-t text { fill: #3a84d8; }
.cells rect { fill: url(#h); stroke: #b4b4b4; stroke-width: 1; }
.cells path { stroke: #b4b4b4; stroke-width: 1; fill: none; }

/* alarm banner */
.banner { display: flex; margin: 3px 0 0 47px; width: 848px; height: 67px; background: #f0f0f0; font-size: 5.95px; padding-right: 1px; }
.counts { width: 28px; margin: 2px 1px; background: #f4000c; display: flex; flex-direction: column; align-items: center; justify-content: space-between; padding: 8px 0 8px; color: #160a0a; font-size: 11px; }
.counts b { font-weight: 700; line-height: 12px; }
.counts hr { width: 16px; border: 0; border-top: 1px solid #e84048; margin: 0; }
.alarms { flex: 1; min-width: 0; display: flex; flex-direction: column; background: #fff; }
.a-row { display: grid; grid-template-columns: 35px 97px 238px 238px 170.500px 26.500px; height: 6.68px; line-height: 6.68px; white-space: nowrap; padding-left: 4px; }
.a-head { height: 9px; line-height: 9px; background: #f0f0f0; color: #666; }
.a-head span + span { border-left: 1px solid #bbb; padding-left: 4px; }
.a-row span { overflow: hidden; }
.a-body { height: 49px; }
.a-row:not(.a-head) span + span { padding-left: 4px; }
.high { color: #8c2c4c; }
.crit { color: #a4d4a4; }
.hscroll { height: 8px; margin-bottom: 1px; background: #f2f2f2; display: flex; align-items: center; font-size: 6px; color: #555; }
.sl { width: 5px; text-align: center; }
.thumb { width: 738px; height: 6px; background: #c8c8c8; }
.sr { margin-left: 61px; }
.vscroll { width: 8px; background: #f0f0f0; display: flex; flex-direction: column; font-size: 5px; color: #666; text-align: center; }
.vscroll span { line-height: 8px; }
.vscroll i { height: 7px; background: #c8c8c8; margin: 0 1px; flex: none; }
.vscroll .dn { margin-top: 38px; }

.caption { margin: 24px 0 0; padding-left: 24px; text-align: center; font-size: 17px; line-height: 20px; font-weight: 700; color: #5c5c5c; }

/* annotations laid over the figure */
.callout { position: absolute; border: 2px solid #f5000f; background: #fff; font-size: 15px; line-height: 20px; text-align: center; color: #5c6470; padding-top: 5px; }
.c-shell { left: 207px; top: 24px; width: 174px; height: 54px; }
.c-quick { left: 408px; top: 24px; width: 175px; height: 54px; }
.c-logon { left: 598px; top: 25px; width: 174px; height: 54px; }
.c-server { left: 782px; top: 25px; width: 115px; height: 54px; }
.c-db { left: 22px; top: 266px; width: 106px; height: 72px; padding-top: 17px; }
.c-alarm { left: 121px; top: 616px; width: 174px; height: 33px; padding-top: 5px; }
.c-over { left: 702px; top: 616px; width: 174px; height: 33px; padding-top: 5px; }
.arrows { position: absolute; left: 0; top: 0; pointer-events: none; }
```
